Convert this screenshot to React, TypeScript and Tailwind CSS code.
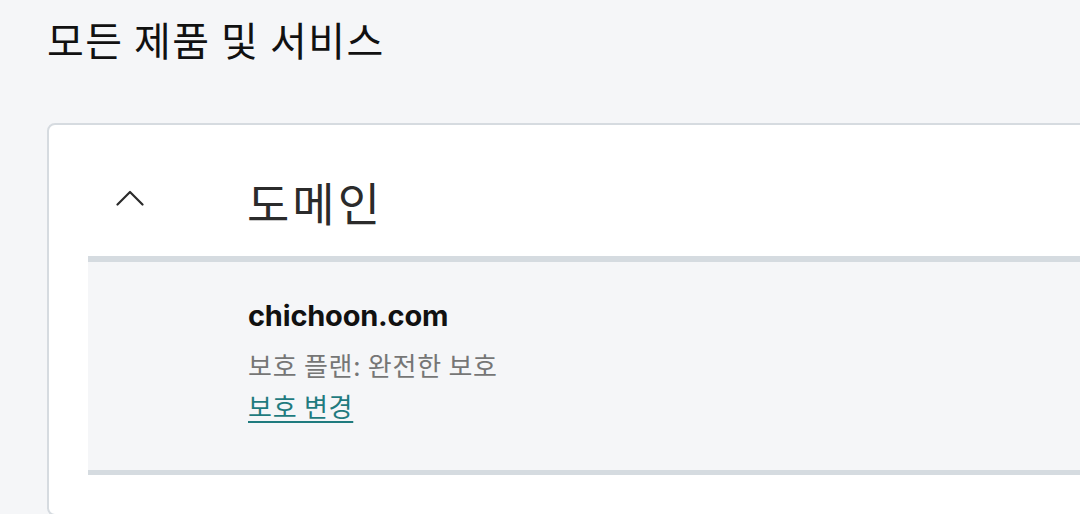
import React from 'react';

const KR = "font-['Noto_Sans_CJK_KR','Noto_Sans',sans-serif]";

function ChevronUp() {
  return (
    <svg width="28" height="16" viewBox="0 0 28 16" fill="none" className="block">
      <polyline points="1.5,14.5 14,2 26.5,14.5" stroke="#2b2b2b" strokeWidth="2.2" strokeLinecap="round" strokeLinejoin="round" />
    </svg>
  );
}

export default function App() {
  return (
    <div className={`h-[514px] overflow-hidden bg-[#f5f6f8] pl-[47px] pt-[15px] ${KR}`}>
      {/* Page title */}
      <h1 className="text-[40px] leading-[48px] tracking-[1.5px] font-normal text-[#111111]">모든 제품 및 서비스</h1>

      {/* Products card */}
      <section className="mt-[60px] w-[1100px] h-[393px] bg-white border-2 border-[#d6dbe0] rounded-[8px]">
        <div className="flex items-start h-[131px] pt-[48px] pl-[67px]">
          <button className="mt-[17px] w-[28px]">
            <ChevronUp />
          </button>
          <h2 className="ml-[103px] text-[46px] leading-[56px] tracking-[3px] font-normal text-[#2b2b2b]">도메인</h2>
        </div>

        <div className="ml-[39px] bg-[#f5f6f8] border-t-[6px] border-b-[5px] border-[#d5dbe0] pl-[160px] pt-[36px] pb-[46px]">
          <div className="font-['Inter','Noto_Sans_CJK_KR',sans-serif] text-[29px] leading-[36px] font-bold text-[#111111] tracking-[-0.2px]">
            chichoon.com
          </div>
          <div className="mt-[13px] text-[26px] leading-[36px] tracking-[0.75px] text-[#767676]">보호 플랜: 완전한 보호</div>
          <a href="#" className="mt-[5px] block w-fit text-[26px] leading-[36px] tracking-[0.75px] text-[#1f7b7f] underline decoration-2 underline-offset-[4px]">
            보호 변경
          </a>
        </div>
      </section>
    </div>
  );
}
